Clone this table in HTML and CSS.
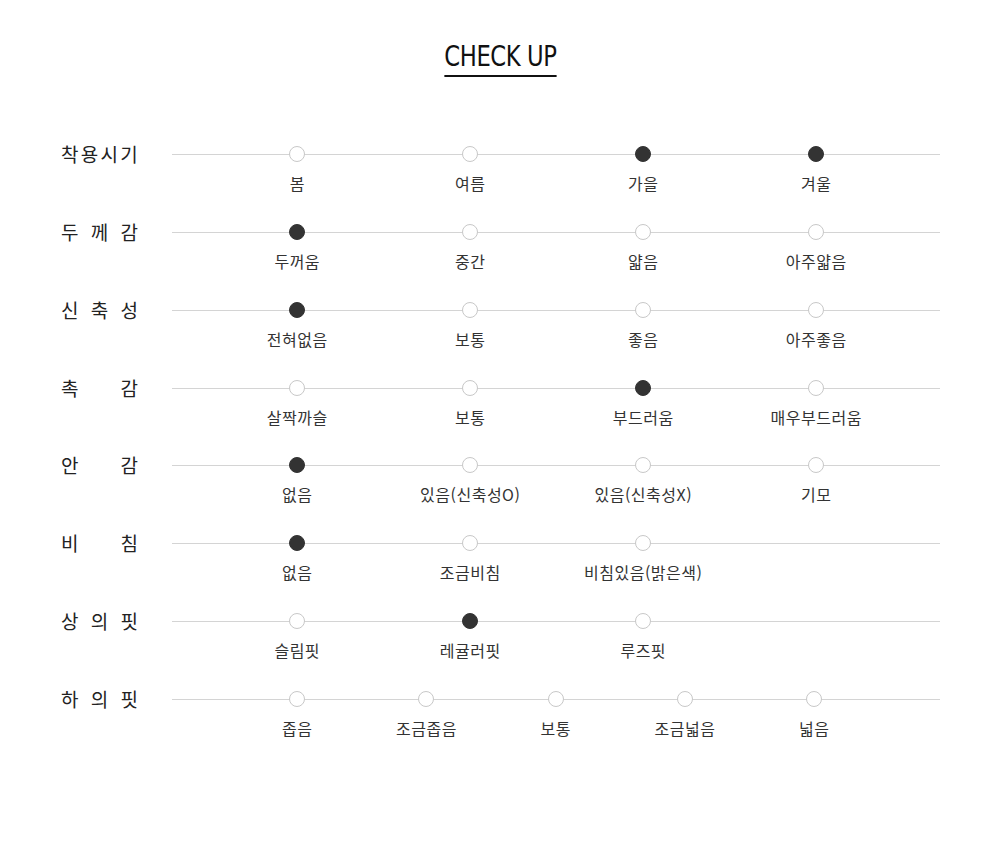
FILE: index.html
```html
<!DOCTYPE html>
<html lang="ko">
<head>
<meta charset="utf-8">
<title>CHECK UP</title>
<link rel="stylesheet" href="styles.css">
</head>
<body>
<div class="checkup">
  <div class="title-wrap"><h2 class="title">CHECK UP</h2></div>
  <div class="rows">
    <div class="row">
      <div class="label wide">착용시기</div>
      <div class="track">
        <div class="opts cols4">
          <div class="opt"><span class="dot"></span><span class="txt">봄</span></div>
          <div class="opt"><span class="dot"></span><span class="txt">여름</span></div>
          <div class="opt"><span class="dot on"></span><span class="txt">가을</span></div>
          <div class="opt"><span class="dot on"></span><span class="txt">겨울</span></div>
        </div>
      </div>
    </div>
    <div class="row">
      <div class="label">두 께 감</div>
      <div class="track">
        <div class="opts cols4">
          <div class="opt"><span class="dot on"></span><span class="txt">두꺼움</span></div>
          <div class="opt"><span class="dot"></span><span class="txt">중간</span></div>
          <div class="opt"><span class="dot"></span><span class="txt">얇음</span></div>
          <div class="opt"><span class="dot"></span><span class="txt">아주얇음</span></div>
        </div>
      </div>
    </div>
    <div class="row">
      <div class="label">신 축 성</div>
      <div class="track">
        <div class="opts cols4">
          <div class="opt"><span class="dot on"></span><span class="txt">전혀없음</span></div>
          <div class="opt"><span class="dot"></span><span class="txt">보통</span></div>
          <div class="opt"><span class="dot"></span><span class="txt">좋음</span></div>
          <div class="opt"><span class="dot"></span><span class="txt">아주좋음</span></div>
        </div>
      </div>
    </div>
    <div class="row">
      <div class="label">촉 감</div>
      <div class="track">
        <div class="opts cols4">
          <div class="opt"><span class="dot"></span><span class="txt">살짝까슬</span></div>
          <div class="opt"><span class="dot"></span><span class="txt">보통</span></div>
          <div class="opt"><span class="dot on"></span><span class="txt">부드러움</span></div>
          <div class="opt"><span class="dot"></span><span class="txt">매우부드러움</span></div>
        </div>
      </div>
    </div>
    <div class="row">
      <div class="label">안 감</div>
      <div class="track">
        <div class="opts cols4">
          <div class="opt"><span class="dot on"></span><span class="txt">없음</span></div>
          <div class="opt"><span class="dot"></span><span class="txt">있음(신축성O)</span></div>
          <div class="opt"><span class="dot"></span><span class="txt">있음(신축성X)</span></div>
          <div class="opt"><span class="dot"></span><span class="txt">기모</span></div>
        </div>
      </div>
    </div>
    <div class="row">
      <div class="label">비 침</div>
      <div class="track">
        <div class="opts cols4">
          <div class="opt"><span class="dot on"></span><span class="txt">없음</span></div>
          <div class="opt"><span class="dot"></span><span class="txt">조금비침</span></div>
          <div class="opt"><span class="dot"></span><span class="txt">비침있음(밝은색)</span></div>
        </div>
      </div>
    </div>
    <div class="row">
      <div class="label">상 의 핏</div>
      <div class="track">
        <div class="opts cols4">
          <div class="opt"><span class="dot"></span><span class="txt">슬림핏</span></div>
          <div class="opt"><span class="dot on"></span><span class="txt">레귤러핏</span></div>
          <div class="opt"><span class="dot"></span><span class="txt">루즈핏</span></div>
        </div>
      </div>
    </div>
    <div class="row">
      <div class="label">하 의 핏</div>
      <div class="track">
        <div class="opts cols5">
          <div class="opt"><span class="dot"></span><span class="txt">좁음</span></div>
          <div class="opt"><span class="dot"></span><span class="txt">조금좁음</span></div>
          <div class="opt"><span class="dot"></span><span class="txt">보통</span></div>
          <div class="opt"><span class="dot"></span><span class="txt">조금넓음</span></div>
          <div class="opt"><span class="dot"></span><span class="txt">넓음</span></div>
        </div>
      </div>
    </div>
  </div>
</div>
</body>
</html>
```

FILE: styles.css
```css
html, body {
  margin: 0;
  padding: 0;
  background: #fff;
}

body {
  font-family: "Noto Sans CJK KR", "Noto Sans", sans-serif;
  color: #222;
}

.checkup {
  width: 1000px;
  padding: 0 60px 0 61px;
  box-sizing: border-box;
}

.title-wrap {
  display: flex;
  justify-content: center;
  padding-top: 41px;
  height: 36px;
}

.title {
  margin: 0;
  font-family: "DejaVu Sans Condensed", "DejaVu Sans", sans-serif;
  font-weight: normal;
  font-size: 29px;
  line-height: 30px;
  letter-spacing: -0.5px;
  color: #111;
  padding-bottom: 0;
  border-bottom: 2px solid #111;
  transform: scaleX(0.87);
  transform-origin: center top;
}

.rows {
  margin-top: 69px;
  display: flex;
  flex-direction: column;
}

.row {
  display: grid;
  grid-template-columns: 111px 1fr;
  height: 77.86px;
}

.label {
  width: 77px;
  height: 16px;
  font-size: 19px;
  line-height: 16px;
  color: #222;
  text-align: justify;
  text-align-last: justify;
  white-space: nowrap;
}

.label.wide {
  text-align: left;
  text-align-last: left;
  letter-spacing: 2.3px;
}

.track {
  position: relative;
}

.track::before {
  content: "";
  position: absolute;
  left: 0;
  right: 0;
  top: 8px;
  height: 1px;
  background: #d4d4d4;
}

.opts {
  position: relative;
  display: grid;
}

.cols4 {
  padding-left: 38.5px;
  grid-template-columns: repeat(4, 173px);
}

.cols5 {
  padding-left: 60.4px;
  grid-template-columns: repeat(5, 129.25px);
}

.opt {
  display: flex;
  flex-direction: column;
  align-items: center;
}

.dot {
  width: 16px;
  height: 16px;
  box-sizing: border-box;
  border-radius: 50%;
  border: 1px solid #c8c8c8;
  background: #fff;
}

.dot.on {
  background: #333;
  border-color: #333;
}

.txt {
  margin-top: 9px;
  font-size: 16px;
  line-height: 24px;
  color: #333;
  white-space: nowrap;
  letter-spacing: 0.5px;
  text-indent: 0.5px;
}
```
